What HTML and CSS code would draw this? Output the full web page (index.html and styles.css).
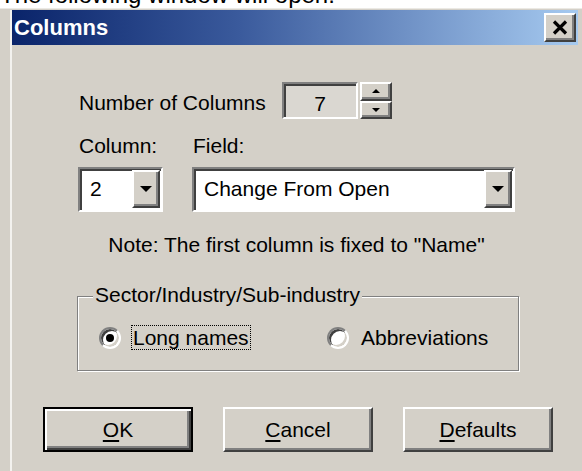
FILE: index.html
```html
<!DOCTYPE html>
<html>
<head>
<meta charset="utf-8">
<title>Columns</title>
<link rel="stylesheet" href="styles.css">
</head>
<body>
<div class="intro"><p>The following window will open:</p></div>
<div class="window">
  <div class="frame">
    <div class="titlebar">
      <span class="title">Columns</span>
      <button class="close raised" type="button" aria-label="Close">
        <svg width="16" height="15" viewBox="0 0 16 15"><path d="M2 1.5 L14 13.5 M14 1.5 L2 13.5" stroke="#000" stroke-width="3.2" fill="none"/></svg>
      </button>
    </div>
    <div class="client">
      <div class="count-row">
        <span class="count-label">Number of Columns</span>
        <div class="spin">
          <div class="spin-edit sunken">7</div>
          <div class="spin-btns">
            <span class="spin-btn raised"><svg width="8" height="4" viewBox="0 0 8 4"><polygon points="0,4 8,4 4,0" fill="#000"/></svg></span>
            <span class="spin-btn raised"><svg width="8" height="4" viewBox="0 0 8 4"><polygon points="0,0 8,0 4,4" fill="#000"/></svg></span>
          </div>
        </div>
      </div>
      <div class="labels-row">
        <span class="col-label">Column:</span>
        <span>Field:</span>
      </div>
      <div class="combos-row">
        <div class="combo combo-col sunken">
          <span class="combo-text">2</span>
          <span class="combo-btn raised"><svg width="12" height="6" viewBox="0 0 12 6"><polygon points="0,0 12,0 6,6" fill="#000"/></svg></span>
        </div>
        <div class="combo combo-field sunken">
          <span class="combo-text">Change From Open</span>
          <span class="combo-btn raised"><svg width="12" height="6" viewBox="0 0 12 6"><polygon points="0,0 12,0 6,6" fill="#000"/></svg></span>
        </div>
      </div>
      <p class="note">Note: The first column is fixed to &quot;Name&quot;</p>
      <div class="group">
        <span class="group-legend">Sector/Industry/Sub-industry</span>
        <div class="radios">
          <label class="radio radio-long">
            <span class="radio-ring"><span class="radio-dot"></span></span>
            <span class="radio-text focus">Long names</span>
          </label>
          <label class="radio">
            <span class="radio-ring"></span>
            <span class="radio-text">Abbreviations</span>
          </label>
        </div>
      </div>
      <div class="buttons">
        <button class="btn default" type="button"><u>O</u>K</button>
        <button class="btn" type="button"><u>C</u>ancel</button>
        <button class="btn" type="button"><u>D</u>efaults</button>
      </div>
    </div>
  </div>
</div>
</body>
</html>
```
FILE: styles.css
```css
* { box-sizing: border-box; }

html, body {
  margin: 0;
  padding: 0;
}

body {
  width: 582px;
  height: 471px;
  overflow: hidden;
  background: #fff;
  color: #000;
  font-family: "Liberation Sans", Arial, sans-serif;
  font-size: 21px;
  line-height: 24px;
}

/* page sentence above the window, scrolled mostly out of view */
.intro {
  height: 8px;
  overflow: hidden;
}
.intro p {
  margin: -17px 0 0 0;
  font-size: 24px;
  line-height: 24px;
}

/* window frame */
.window {
  height: 463px;
  background: #d4d0c8;
  border-top: 1px solid #ebe9e4;
  padding: 1px 4px 0 10px;
}
.frame {
  height: 100%;
  border-left: 2px solid #f3f2ef;
}

/* caption */
.titlebar {
  height: 35px;
  display: flex;
  align-items: center;
  justify-content: space-between;
  padding: 0 2px;
  background: linear-gradient(to right, #0a246a 0%, #3a5a9c 40%, #a6caf0 100%);
}
.title {
  color: #fff;
  font-weight: bold;
  font-size: 22px;
  line-height: 24px;
  margin-top: 1px;
}
.close {
  width: 32px;
  height: 29px;
  padding: 0;
  display: flex;
  align-items: center;
  justify-content: center;
}

/* 3D borders */
.raised {
  background: #d4d0c8;
  border: 2px solid;
  border-color: #fff #404040 #404040 #fff;
  box-shadow: inset -2px -2px 0 #808080;
}
.sunken {
  border: 2px solid;
  border-color: #808080 #fff #fff #808080;
  box-shadow: inset 2px 2px 0 #404040;
}

/* dialog body */
.client {
  padding-top: 37px;
}

.count-row {
  display: flex;
  align-items: center;
  height: 37px;
  margin-left: 66px;
}
.count-label {
  width: 204px;
  padding-left: 1px;
  margin-top: 4px;
}
.spin {
  display: flex;
  gap: 2px;
  height: 37px;
}
.spin-edit {
  width: 76px;
  height: 37px;
  background: #dad7d1;
  text-align: center;
  padding-top: 8px;
}
.spin-btns {
  display: flex;
  flex-direction: column;
  width: 32px;
}
.spin-btn {
  flex: 1;
  display: flex;
  align-items: center;
  justify-content: center;
}

.labels-row {
  display: flex;
  margin: 15px 0 0 67px;
}
.col-label {
  width: 114px;
}

.combos-row {
  display: flex;
  gap: 29px;
  margin: 9px 0 0 66px;
  height: 45px;
}
.combo {
  display: flex;
  align-items: center;
  background: #fff;
  padding: 1px 1px 2px 2px;
}
.combo-col { width: 85px; }
.combo-field { width: 323px; }
.combo-text {
  flex: 1;
  padding-left: 8px;
}
.combo-btn {
  width: 28px;
  align-self: stretch;
  display: flex;
  align-items: center;
  justify-content: center;
}

.note {
  margin: 21px 0 0 66px;
  width: 437px;
  text-align: center;
}

/* etched group box */
.group {
  position: relative;
  margin: 39px 0 0 65px;
  width: 442px;
  height: 75px;
  border: 1px solid #808080;
  box-shadow: inset 1px 1px 0 #fff, 1px 1px 0 #fff;
  padding: 28px 0 0 21px;
}
.group-legend {
  position: absolute;
  left: 15px;
  top: -14px;
  padding: 0 2px;
  background: #d4d0c8;
}
.radios {
  display: flex;
  align-items: center;
  height: 25px;
}
.radio {
  display: flex;
  align-items: center;
  gap: 10px;
}
.radio-long {
  width: 228px;
}
.radio-ring {
  width: 22px;
  height: 22px;
  border-radius: 50%;
  border: 2px solid;
  border-color: #808080 #fff #fff #808080;
  background: #fff;
  box-shadow: inset 2px 2px 0 #404040, inset -2px -2px 0 #d4d0c8;
  display: flex;
  align-items: center;
  justify-content: center;
}
.radio-dot {
  width: 8px;
  height: 8px;
  border-radius: 50%;
  background: #000;
}
.radio-text {
  line-height: 23px;
  border: 1px solid transparent;
  padding: 0 1px;
}
.focus {
  border: 1px dotted #000;
}

/* push buttons */
.buttons {
  display: flex;
  gap: 30px;
  margin: 36px 0 0 31px;
}
.btn {
  width: 150px;
  height: 45px;
  font: inherit;
  color: #000;
  background: #d4d0c8;
  border: 2px solid;
  border-color: #fff #404040 #404040 #fff;
  box-shadow: inset -2px -2px 0 #808080;
  padding: 0;
}
.btn.default {
  border: 2px solid #000;
  box-shadow: inset 2px 2px 0 #fff, inset -2px -2px 0 #404040, inset -4px -4px 0 #808080;
}
.btn u {
  text-underline-offset: 3px;
}
```
